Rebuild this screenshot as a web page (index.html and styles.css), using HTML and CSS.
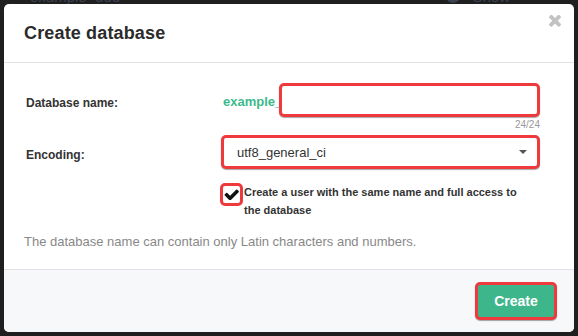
FILE: index.html
```html
<!DOCTYPE html>
<html>
<head>
<meta charset="utf-8">
<link rel="stylesheet" href="styles.css">
</head>
<body>
<div class="backdrop-row">
  <span class="bg-name">example_ddd</span>
  <span class="bg-show"><span class="bg-eye"></span>Show</span>
</div>
<div class="modal">
  <div class="modal-header">
    <h4 class="modal-title">Create database</h4>
    <span class="close" aria-label="Close">
      <svg viewBox="110 400 1188 1154" width="12" height="12"><path fill="currentColor" d="M1298 1322q0 40-28 68l-136 136q-28 28-68 28t-68-28l-294-294-294 294q-28 28-68 28t-68-28l-136-136q-28-28-28-68t28-68l294-294-294-294q-28-28-28-68t28-68l136-136q28-28 68-28t68 28l294 294 294-294q28-28 68-28t68 28l136 136q28 28 28 68t-28 68l-294 294 294 294q28 28 28 68z"/></svg>
    </span>
  </div>
  <div class="modal-body">
    <div class="form-row">
      <label class="form-label">Database name:</label>
      <div class="field">
        <div class="prefixed">
          <span class="prefix">example_</span>
          <div class="input hl"></div>
        </div>
        <div class="counter">24/24</div>
      </div>
    </div>
    <div class="form-row">
      <label class="form-label">Encoding:</label>
      <div class="field">
        <div class="select hl">
          <span>utf8_general_ci</span>
          <span class="caret"></span>
        </div>
      </div>
    </div>
    <div class="check-row">
      <span class="checkbox">
        <svg viewBox="60 330 1620 1110" width="15" height="11"><path fill="#111" d="M1671 566q0 40-28 68l-724 724-136 136q-28 28-68 28t-68-28l-136-136-362-362q-28-28-28-68t28-68l136-136q28-28 68-28t68 28l294 295 656-657q28-28 68-28t68 28l136 136q28 28 28 68z"/></svg>
      </span>
      <span class="check-text">Create a user with the same name and full access to the database</span>
    </div>
    <p class="help">The database name can contain only Latin characters and numbers.</p>
  </div>
  <div class="modal-footer">
    <button class="btn-create">Create</button>
  </div>
</div>
</body>
</html>
```
FILE: styles.css
```css
* { box-sizing: border-box; }
html, body { margin: 0; padding: 0; }
body {
  background: #1f1f1f;
  font-family: "Liberation Sans", Arial, sans-serif;
  color: #333;
  width: 578px;
  height: 336px;
  overflow: hidden;
}
.backdrop-row {
  height: 4px;
  overflow: hidden;
  display: flex;
  justify-content: space-between;
  padding: 0 68px 0 30px;
  color: #3a4150;
  font-size: 15px;
}
.bg-name, .bg-show { margin-top: -12px; line-height: 15px; display: flex; align-items: center; gap: 12px; }
.bg-eye { width: 14px; height: 14px; border-radius: 50%; background: #3a4150; }
.modal {
  margin: 0 4px;
  height: 328px;
  background: #fff;
  border-radius: 5px;
  display: flex;
  flex-direction: column;
  overflow: hidden;
}
.modal-header {
  height: 59px;
  border-bottom: 1px solid #e3e3e3;
  display: flex;
  align-items: center;
  justify-content: space-between;
  padding: 0 13px 0 20px;
}
.modal-title {
  margin: 0;
  font-size: 18px;
  font-weight: bold;
  color: #2b2b2b;
  padding-top: 1px;
  letter-spacing: 0.15px;
}
.close {
  color: #c2c2c2;
  align-self: flex-start;
  margin-top: 11px;
  display: flex;
}
.modal-body {
  flex: 1;
  padding: 20px 34px 0 22px;
}
.form-row {
  display: grid;
  grid-template-columns: 195px 1fr;
  align-items: start;
}
.form-label {
  font-size: 12px;
  font-weight: bold;
  color: #333;
  line-height: 34px;
  padding-top: 3px;
}
.prefixed { display: flex; align-items: center; }
.prefix {
  color: #3dba8c;
  font-size: 13px;
  font-weight: bold;
  width: 58px;
  padding-left: 2px;
  padding-top: 3px;
}
.hl {
  border: 3px solid #ee3a3d;
  border-radius: 5px;
  box-shadow: 0 1px 1px rgba(0,0,0,.35);
  background: #fff;
}
.input { flex: 1; height: 34px; }
.counter {
  text-align: right;
  font-size: 10px;
  color: #999;
  height: 18px;
  line-height: 12px;
  padding-top: 2px;
}
.select {
  height: 34px;
  display: flex;
  align-items: center;
  justify-content: space-between;
  padding: 0 10px 0 13px;
  font-size: 13px;
  color: #333;
}
.caret {
  width: 0; height: 0;
  border-left: 4px solid transparent;
  border-right: 4px solid transparent;
  border-top: 4px solid #555;
}
.check-row {
  display: flex;
  align-items: flex-start;
  margin: 11px 0 0 194px;
}
.checkbox {
  width: 23px;
  height: 23px;
  border: 3px solid #ee3a3d;
  border-radius: 5px;
  flex: none;
  display: flex;
  align-items: center;
  justify-content: center;
  background: #fff;
}
.check-text {
  font-size: 11px;
  font-weight: bold;
  color: #333;
  line-height: 18px;
  margin-top: 0;
  margin-left: 1px;
  width: 290px;
}
.help {
  margin: 15px 0 0 -2px;
  font-size: 13px;
  color: #888;
  line-height: 16px;
}
.modal-footer {
  height: 63px;
  border-top: 1px solid #dfe1e5;
  background: #f7f8fa;
  display: flex;
  align-items: center;
  justify-content: flex-end;
  padding: 0 17px 0 0;
}
.btn-create {
  height: 38px;
  width: 82px;
  border: 3px solid #ee3a3d;
  border-radius: 5px;
  background: #3db68c;
  color: #fff;
  font-family: "Liberation Sans", Arial, sans-serif;
  font-size: 14px;
  font-weight: bold;
  padding: 0;
  box-shadow: 0 1px 1px rgba(0,0,0,.35);
}
```
